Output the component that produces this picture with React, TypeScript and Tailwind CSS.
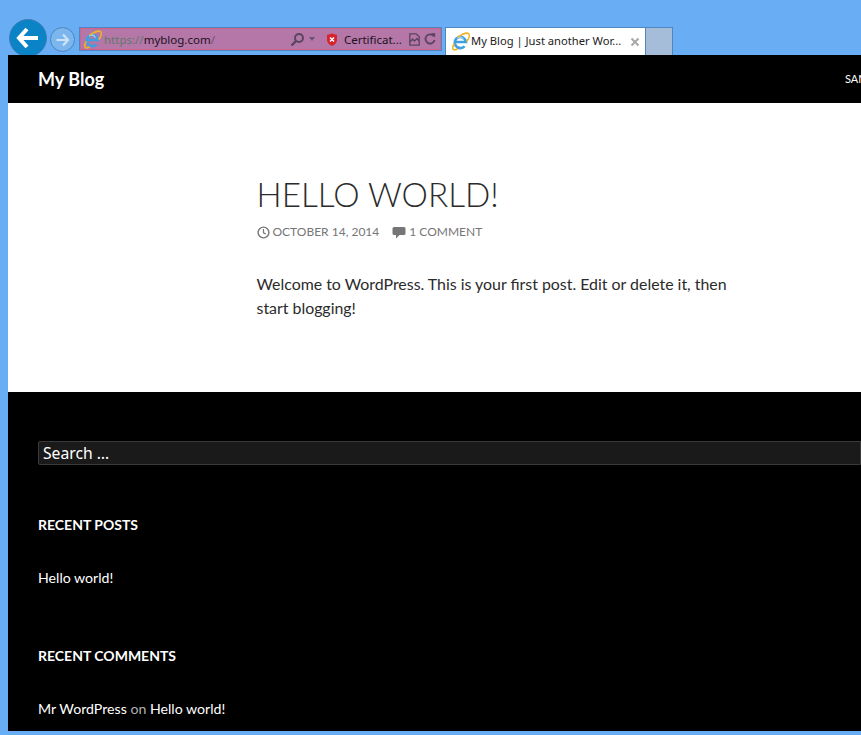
const IE = () => (
  <svg width="19" height="19" viewBox="0 0 20 20" className="shrink-0">
    <path d="M4.5 10.5h11.2A5.9 5.9 0 1 0 14.3 15" fill="none" stroke="#3f9fe0" strokeWidth="2.8" />
    <path d="M6.5 6.5C9 4.5 12 5 13 8" fill="none" stroke="#9fd4f5" strokeWidth="1.4" />
    <path d="M3.5 12C.5 17 1.5 20.5 7 18M7 5.5C12 2 17 .5 18.6 1.8 20 3.2 18.8 7 16.5 10" fill="none" stroke="#f0b429" strokeWidth="1.7" />
  </svg>
);

export default function App() {
  return (
    <div className="relative flex h-[735px] w-[861px] flex-col overflow-hidden bg-[#69adf5] font-['Lato',sans-serif]">
      <div className="flex h-[55px] shrink-0 items-end pl-[9px]">
        <div className="mb-[-2px] flex h-[38px] w-[38px] items-center justify-center self-end rounded-full border border-[#3f7db5] bg-[#0a84c6]">
          <svg width="24" height="22" viewBox="0 0 24 22">
            <path d="M11 2 3 11l8 9M3.5 11H22" fill="none" stroke="#fff" strokeWidth="4" />
          </svg>
        </div>
        <div className="mb-[3px] ml-[3px] flex h-[25px] w-[25px] items-center justify-center rounded-full border border-[#4f86bd] bg-[#7cb6ef]">
          <svg width="15" height="14" viewBox="0 0 15 14">
            <path d="M8 1.5 13 7l-5 5.5M13 7H1.5" fill="none" stroke="#cfe3f7" strokeWidth="2.2" />
          </svg>
        </div>
        <div className="mb-[5px] ml-[5px] flex h-[22px] w-[361px] items-center border border-[#d0628c] bg-[#b576a8] font-['Noto_Sans',sans-serif] text-[11.5px] outline outline-1 outline-[#4f86bd]">
          <div className="ml-[2px] mr-[2px]"><IE /></div>
          <span className="mt-[2px] text-[#5f7a6a]">https://</span>
          <span className="mt-[2px] text-[#1b1320]">myblog.com</span>
          <span className="mt-[2px] text-[#6c5478]">/</span>
          <svg className="ml-[75px]" width="15" height="15" viewBox="0 0 15 15">
            <circle cx="9" cy="6" r="4" fill="none" stroke="#5a4560" strokeWidth="2" />
            <path d="M6 9 1.5 13.5" stroke="#5a4560" strokeWidth="2.4" />
          </svg>
          <div className="ml-[4px] h-0 w-0 border-x-[3.5px] border-t-[4px] border-x-transparent border-t-[#6a5570]" />
          <svg className="ml-[11px]" width="12" height="13" viewBox="0 0 12 13">
            <path d="M1 2 6 .5 11 2v5c0 3-2.5 5-5 6-2.5-1-5-3-5-6z" fill="#d8232d" />
            <path d="M4 4.5l4 4M8 4.5l-4 4" stroke="#fff" strokeWidth="1.5" />
          </svg>
          <span className="ml-[6px] mt-[2px] whitespace-nowrap text-[#1b1320]">Certificat...</span>
          <svg className="ml-[7px]" width="11" height="13" viewBox="0 0 11 13">
            <path d="M.8.8h6.4l3 3v8.4H.8zM1 9l2.5-3 2 2L8 5.5 10 8" fill="none" stroke="#5a4560" strokeWidth="1.3" />
          </svg>
          <svg className="ml-[4px]" width="12" height="12" viewBox="0 0 12 12">
            <path d="M9.8 3.2A4.6 4.6 0 1 0 10.6 7" fill="none" stroke="#5a4560" strokeWidth="1.9" />
            <path d="M7 .2h4.2v4.4z" fill="#5a4560" />
          </svg>
        </div>
        <div className="ml-[4px] flex h-[28px] w-[201px] items-center whitespace-nowrap border-x border-t border-[#4f86bd] bg-white pl-[5px] font-['Noto_Sans',sans-serif] text-[11.2px] text-[#222]">
          <IE />
          <span className="ml-[1px]">My Blog | Just another Wor...</span>
          <svg className="ml-[9px]" width="10" height="10" viewBox="0 0 10 10">
            <path d="M1.5 1.5l7 7M8.5 1.5l-7 7" stroke="#a8a8a8" strokeWidth="2" />
          </svg>
        </div>
        <div className="h-[28px] w-[27px] border-r border-t border-[#4f86bd] bg-[#a5bdd8]" />
      </div>

      <div className="ml-[8px] flex min-h-0 flex-col">
        <header className="flex h-[48px] shrink-0 items-center overflow-hidden bg-black pl-[30px]">
          <span className="text-[18px] font-bold text-white">My Blog</span>
          <span className="ml-auto w-[16px] overflow-hidden whitespace-nowrap text-[11px] text-white">SAMPLE PAGE</span>
        </header>
        <main className="h-[289px] shrink-0 bg-white pl-[248.5px] pt-[70px]">
          <h1 className="text-[33.3px] font-light leading-[42px] text-[#2b2b2b]">HELLO WORLD!</h1>
          <div className="mt-[9px] flex h-[16px] items-center text-[12px] text-[#767676]">
            <svg width="13" height="13" viewBox="0 0 13 13">
              <circle cx="6.5" cy="6.5" r="5.4" fill="none" stroke="#767676" strokeWidth="1.4" />
              <path d="M6.5 3v3.8l2.4 1.2" fill="none" stroke="#767676" strokeWidth="1.2" />
            </svg>
            <span className="ml-[3px]">OCTOBER 14, 2014</span>
            <svg className="ml-[13px]" width="14" height="13" viewBox="0 0 14 13">
              <path d="M2 1h10a1.5 1.5 0 0 1 1.5 1.5v5A1.5 1.5 0 0 1 12 9H7.5L4 12.5V9H2A1.5 1.5 0 0 1 .5 7.5v-5A1.5 1.5 0 0 1 2 1z" fill="#767676" />
            </svg>
            <span className="ml-[3px]">1 COMMENT</span>
          </div>
          <p className="mt-[32px] w-[490px] text-[15.9px] leading-[24px] text-[#2b2b2b]">
            Welcome to WordPress. This is your first post. Edit or delete it, then start blogging!
          </p>
        </main>
        <footer className="h-[339px] shrink-0 bg-black pl-[30px] pt-[49px] text-white">
          <div className="h-[24px] rounded-l-[2px] border border-[#3a3a3a] bg-[#1a1a1a] pl-[4px] font-['Noto_Sans',sans-serif] text-[15.7px] leading-[22px]">Search …</div>
          <h2 className="mt-[50px] text-[14px] font-bold leading-[20px]">RECENT POSTS</h2>
          <p className="mt-[33px] text-[14.15px] leading-[20px]">Hello world!</p>
          <h2 className="mt-[58px] text-[14px] font-bold leading-[20px]">RECENT COMMENTS</h2>
          <p className="mt-[33px] text-[14.15px] leading-[20px]">
            Mr WordPress <span className="text-[#b0b0b0]">on</span> Hello world!
          </p>
        </footer>
      </div>
    </div>
  );
}
